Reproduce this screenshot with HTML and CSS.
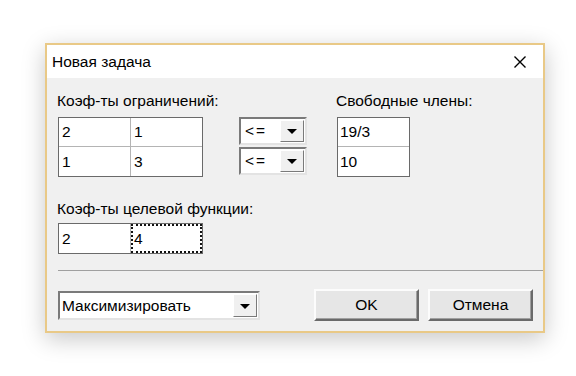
FILE: index.html
```html
<!DOCTYPE html>
<html lang="ru">
<head>
    <meta charset="UTF-8">
    <title>Новая задача</title>
    <link rel="stylesheet" href="styles.css">
</head>
<body>
    <div class="window">
        <div class="titlebar">
            <span class="title">Новая задача</span>
            <svg class="close" width="14" height="14" viewBox="0 0 14 14">
                <path d="M1.5 1.5 L12.5 12.5 M12.5 1.5 L1.5 12.5" stroke="#000" stroke-width="1.4" fill="none"/>
            </svg>
        </div>

        <div class="content">
            <!-- Ограничения -->
            <div class="top">
                <div class="group group-coef">
                    <div class="label">Коэф-ты ограничений:</div>
                    <div class="grid grid-coef">
                        <div class="cell">2</div>
                        <div class="cell">1</div>
                        <div class="cell">1</div>
                        <div class="cell">3</div>
                    </div>
                </div>

                <div class="group group-signs">
                    <div class="label"></div>
                    <div class="signs">
                        <div class="combo combo-small">
                            <span class="combo-text">&lt;=</span>
                            <span class="combo-btn"><i class="arrow"></i></span>
                        </div>
                        <div class="combo combo-small">
                            <span class="combo-text">&lt;=</span>
                            <span class="combo-btn"><i class="arrow"></i></span>
                        </div>
                    </div>
                </div>

                <div class="group group-free">
                    <div class="label">Свободные члены:</div>
                    <div class="grid grid-free">
                        <div class="cell">19/3</div>
                        <div class="cell">10</div>
                    </div>
                </div>
            </div>

            <!-- Целевая функция -->
            <div class="label lbl-target">Коэф-ты целевой функции:</div>
            <div class="grid grid-target">
                <div class="cell">2</div>
                <div class="cell focused">4</div>
            </div>

            <div class="separator"></div>

            <div class="bottom">
                <div class="combo combo-wide">
                    <span class="combo-text">Максимизировать</span>
                    <span class="combo-btn"><i class="arrow"></i></span>
                </div>
                <div class="buttons">
                    <button class="btn">OK</button>
                    <button class="btn">Отмена</button>
                </div>
            </div>
        </div>
    </div>
</body>
</html>
```

FILE: styles.css
```css
* {
    box-sizing: border-box;
    margin: 0;
    padding: 0;
}

body {
    font-family: 'Liberation Sans', Arial, sans-serif;
    font-size: 15.5px;
    color: #000;
    background-color: #fff;
    width: 576px;
    height: 376px;
    overflow: hidden;
}

.window {
    margin: 43px 0 0 45px;
    width: 500px;
    height: 290px;
    border: 2px solid #e9c987;
    background-color: #f0f0f0;
    box-shadow: 0 6px 22px rgba(0, 0, 0, 0.22);
}

.titlebar {
    height: 33px;
    background-color: #fff;
    display: flex;
    align-items: center;
    justify-content: space-between;
    padding: 0 16px 0 5px;
}

.title {
    padding-top: 1px;
}

.close {
    display: block;
}

.content {
    padding: 14px 10px 10px 11px;
}

/* верхний блок */
.top {
    display: flex;
    align-items: flex-start;
}

.group {
    display: flex;
    flex-direction: column;
    gap: 7px;
}

.group-coef {
    width: 145px;
}

.group-signs {
    width: 68px;
    margin-left: 36px;
}

.group-free {
    width: 73px;
    margin-left: 30px;
}

.label {
    line-height: 18px;
    height: 18px;
    white-space: nowrap;
}

.group-coef .label {
    margin-left: -1px;
}

.group-free .label {
    margin-left: -1px;
}

.grid {
    display: grid;
    border: 1px solid #6a6a6a;
    background-color: #fff;
}

.grid-coef {
    height: 60px;
    grid-template-columns: 72px 71px;
    grid-template-rows: 29px 29px;
}

.grid-free {
    height: 60px;
    grid-template-rows: 29px 29px;
}

.cell {
    display: flex;
    align-items: center;
    padding-left: 3px;
    border-right: 1px solid #b4b4b4;
    border-bottom: 1px solid #b4b4b4;
}

.grid-coef .cell:nth-child(2n),
.grid-free .cell,
.grid-target .cell:last-child {
    border-right: none;
}

.grid-coef .cell:nth-child(n+3),
.grid-free .cell:last-child,
.grid-target .cell {
    border-bottom: none;
}

.grid-free .cell {
    padding-left: 2px;
}

.signs {
    display: flex;
    flex-direction: column;
    gap: 2px;
}

/* выпадающие списки */
.combo {
    display: flex;
    background-color: #fff;
    border: 2px solid;
    border-color: #7a7a7a #e3e3e3 #e3e3e3 #7a7a7a;
}

.combo-small {
    height: 28px;
}

.combo-text {
    flex: 1;
    display: flex;
    align-items: center;
    padding-left: 4px;
    white-space: nowrap;
}

.combo-small .combo-text {
    letter-spacing: 2px;
}

.combo-btn {
    width: 24px;
    display: flex;
    align-items: center;
    justify-content: center;
    background-color: #f0f0f0;
    border: 1px solid;
    border-color: #fff #7a7a7a #7a7a7a #fff;
    margin: 1px 1px 1px 0;
}

.arrow {
    width: 0;
    height: 0;
    border-left: 5px solid transparent;
    border-right: 5px solid transparent;
    border-top: 5px solid #000;
    margin-top: 1px;
}

/* целевая функция */
.lbl-target {
    margin: 23px 0 0 -1px;
}

.grid-target {
    margin-top: 5px;
    width: 145px;
    height: 31px;
    grid-template-columns: 72px 71px;
}

.focused {
    outline: 2px dotted #111;
    outline-offset: -2px;
}

.separator {
    margin: 16px -10px 0 0;
    height: 1px;
    background-color: #a0a0a0;
}

.bottom {
    margin-top: 18px;
    display: flex;
    align-items: center;
    justify-content: space-between;
}

.combo-wide {
    width: 202px;
    height: 29px;
    margin-top: 1px;
}

.combo-wide .combo-text {
    padding-left: 2px;
}

.buttons {
    display: flex;
    gap: 9px;
}

.btn {
    width: 105px;
    height: 32px;
    font-family: inherit;
    font-size: 15.5px;
    color: #000;
    background-color: #e6e6e6;
    border: 2px solid;
    border-color: #fcfcfc #6a6a6a #6a6a6a #fcfcfc;
    box-shadow: inset -1px -1px 0 #a0a0a0;
}
```
